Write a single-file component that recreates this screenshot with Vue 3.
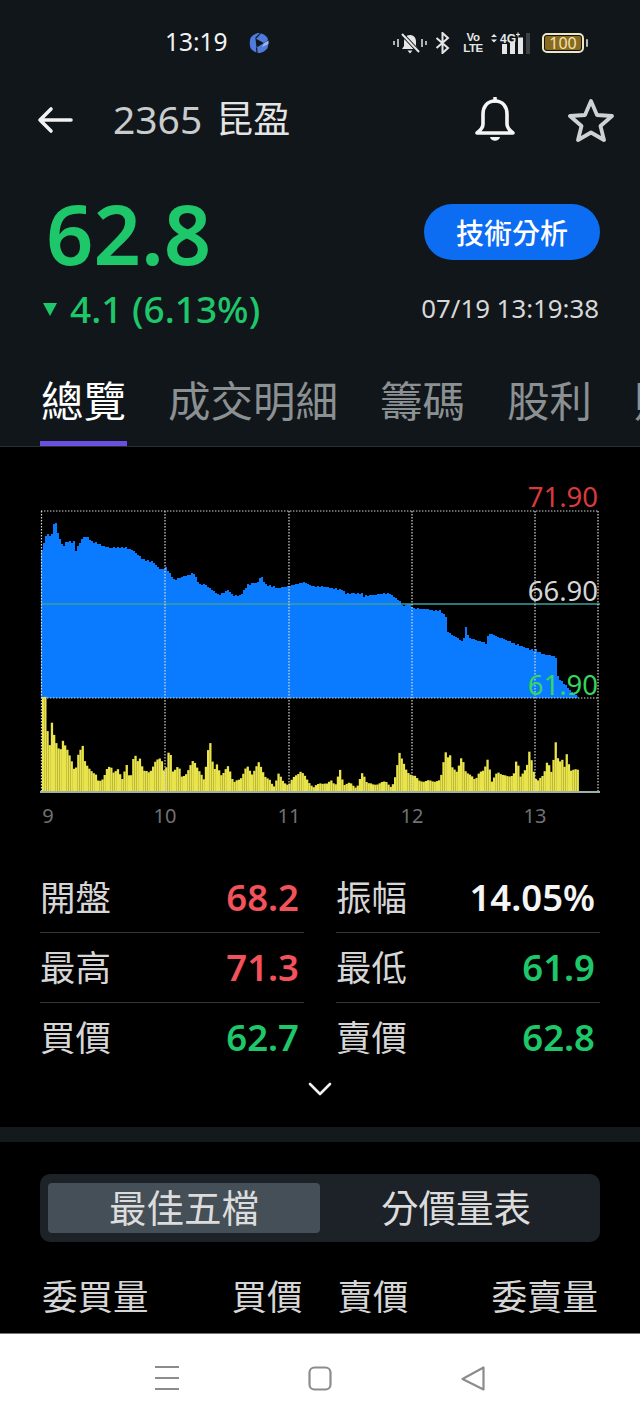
<script setup>
const tabs = ['成交明細', '籌碼', '股利', '財務']

const stats = [
  [{ label: '開盤', value: '68.2', tone: 'up' }, { label: '振幅', value: '14.05%', tone: 'flat' }],
  [{ label: '最高', value: '71.3', tone: 'up' }, { label: '最低', value: '61.9', tone: 'down' }],
  [{ label: '買價', value: '62.7', tone: 'down' }, { label: '賣價', value: '62.8', tone: 'down' }]
]

const gridX = [165, 289, 412, 535]
const xLabels = [
  { x: 48, t: '9' }, { x: 165, t: '10' }, { x: 289, t: '11' }, { x: 412, t: '12' }, { x: 535, t: '13' }
]

const pricePts = [
  [41, 550], [42, 547], [45, 535], [51, 535], [52, 523], [55, 523], [58, 537], [62, 547], [65, 542], [73, 542],
  [75, 550], [82, 537], [87, 537], [90, 541], [108, 548], [123, 547], [133, 551], [143, 560], [152, 562], [160, 570],
  [165, 567], [173, 580], [193, 573], [198, 584], [205, 585], [218, 595], [227, 590], [233, 596], [240, 595], [247, 585],
  [257, 582], [260, 575], [265, 585], [278, 588], [292, 585], [303, 582], [313, 587], [320, 586], [342, 590], [345, 594],
  [360, 593], [363, 596], [388, 593], [400, 602], [402, 607], [408, 603], [412, 608], [440, 611], [445, 617], [447, 632],
  [455, 637], [462, 642], [465, 628], [468, 638], [485, 643], [488, 633], [510, 642], [530, 650], [535, 650], [542, 654],
  [555, 657], [557, 677], [567, 688], [577, 697]
]

const lerp = (pts, x) => {
  for (let i = 1; i < pts.length; i++) {
    if (x <= pts[i][0]) {
      const [x0, y0] = pts[i - 1]
      const [x1, y1] = pts[i]
      return y0 + ((y1 - y0) * (x - x0)) / (x1 - x0 || 1)
    }
  }
  return pts[pts.length - 1][1]
}

let areaPath = 'M41 698'
for (let x = 41; x < 577; x += 2) {
  const y = Math.min(698, Math.round(lerp(pricePts, x) + Math.sin(x * 1.7) * 0.6))
  areaPath += `L${x} ${y}L${x + 2} ${y}`
}
areaPath += 'L578 698Z'

const volZoomL = [
  [38, 655], [46, 655], [47, 755], [52, 755], [53, 935], [57, 935], [58, 800], [65, 728], [72, 770], [80, 800], [90, 815], [97, 780],
  [105, 800], [115, 822], [125, 845], [135, 880], [145, 825], [158, 797], [165, 850], [180, 875], [200, 885], [205, 910],
  [220, 900], [228, 868], [240, 860], [250, 882], [265, 865], [275, 905], [290, 855], [300, 905], [313, 815], [320, 855],
  [327, 828], [340, 875], [358, 880], [375, 848], [393, 835], [405, 885], [418, 803], [428, 875], [445, 860], [455, 895],
  [470, 880], [490, 842], [510, 880], [522, 905], [533, 812], [541, 788], [550, 880], [560, 855], [575, 890], [595, 858],
  [610, 910], [630, 900], [650, 860], [665, 885], [685, 850], [705, 890], [720, 905], [730, 925], [745, 882], [760, 910],
  [775, 915], [795, 890], [812, 875], [830, 900], [850, 925], [870, 910]
]
const volZoomR = [
  [20, 915], [35, 900], [45, 920], [60, 872], [70, 915], [90, 912], [110, 925], [127, 880], [140, 908], [160, 918], [180, 910],
  [200, 908], [215, 925], [225, 895], [238, 818], [248, 845], [260, 880], [285, 890], [295, 905], [340, 905], [360, 905],
  [368, 865], [375, 802], [380, 850], [387, 812], [395, 865], [410, 875], [425, 832], [435, 875], [450, 885], [465, 905],
  [478, 875], [492, 875], [503, 838], [515, 905], [532, 880], [550, 885], [565, 895], [580, 885], [590, 835], [600, 895],
  [620, 860], [628, 815], [640, 875], [650, 905], [670, 890], [682, 840], [695, 885], [707, 785], [715, 850], [725, 838],
  [733, 865], [740, 822], [750, 872], [772, 872]
]
const volPts = [
  ...volZoomL.map(([x, y]) => [x / 3 + 30, (935 - y) / 3]),
  ...volZoomR.map(([x, y]) => [x / 3 + 320, (935 - y) / 3])
]

const bars = []
for (let x = 42; x < 577; x += 2.2) {
  const h = lerp(volPts, x + 0.9) + Math.sin(x * 2.3) * 0.8
  bars.push({ x: +x.toFixed(1), y: +(791 - h).toFixed(1), h: +Math.max(0, h).toFixed(1) })
}
</script>

<template>
  <div class="page">
    <header class="top">
      <div class="status">
        <span class="clock">13:19</span>
        <svg class="app-logo" viewBox="0 0 20 22" width="20" height="22">
          <path d="M10 1 C13 1 17 3.500 18.500 6 C19.500 9 19.500 13 18.500 16 C17 18.500 13 21 10 21 C7 21 3 18.500 1.500 16 C0.500 13 0.500 9 1.500 6 C3 3.500 7 1 10 1 Z" fill="#4f7bdc" />
          <path d="M6.500 6.500 L15 11 L7.500 15.500 Z" fill="#12171b" />
          <path d="M6.500 6.500 C8 4.500 10 3.500 11.500 1 M15 11 C17 11 18 10 20 8 M7.500 15.500 C8 18 8 19 8 22" stroke="#12171b" stroke-width="1.200" fill="none" />
          <path d="M15 11 L19.500 8.500 V12 L13 15 Z" fill="#9db6ee" />
        </svg>
        <span class="status-right">
          <svg width="34" height="22" viewBox="0 0 34 22">
            <path d="M17 3c-4 0-6 3-6 7v4l-2 3h16l-2-3v-4c0-4-2-7-6-7z" fill="#e6e6e6" />
            <path d="M14.500 18.500h5l-2.500 3z" fill="#e6e6e6" />
            <path d="M9 2 L26 20" stroke="#12171b" stroke-width="4" />
            <path d="M9 2 L26 20" stroke="#e6e6e6" stroke-width="2" />
            <path d="M1 9v4M5 7v8M29 7v8M33 9v4" stroke="#e6e6e6" stroke-width="1.500" />
          </svg>
          <svg class="bt" width="15" height="22" viewBox="0 0 15 22" fill="none" stroke="#e6e6e6" stroke-width="2">
            <path d="M1.500 6 L13 16 L7.500 21 V1 L13 6 L1.500 16" />
          </svg>
          <span class="volte"><span>Vo</span><span>LTE</span></span>
          <svg class="signal" width="40" height="22" viewBox="0 0 40 22">
            <path d="M0 5 L3 2 L6 5Z M0 7.500 L3 10.500 L6 7.500Z" fill="#e6e6e6" />
            <text x="9" y="10.500" class="net">4G</text>
            <path d="M25 2.500h4M27 .5v4" stroke="#e6e6e6" stroke-width="1.200" />
            <rect x="11" y="12" width="5" height="10" fill="#e6e6e6" />
            <rect x="19" y="10" width="5" height="12" fill="#e6e6e6" />
            <rect x="27" y="5.500" width="5" height="16.500" fill="#e6e6e6" />
            <rect x="35" y="1" width="4" height="21" fill="#3c4146" />
          </svg>
          <span class="battery"><span class="battery-level">100</span></span>
        </span>
      </div>

      <nav class="nav">
        <svg class="back" width="36" height="28" viewBox="0 0 36 28" fill="none" stroke="#f2f2f2" stroke-width="3.600" stroke-linecap="round" stroke-linejoin="round">
          <path d="M34 14H3M14 3 3 14l11 11" />
        </svg>
        <h1 class="title">2365<span class="title-name">昆盈</span></h1>
        <svg class="bell" width="42" height="46" viewBox="0 0 42 46" fill="none" stroke="#f5f5f5" stroke-width="3.600" stroke-linejoin="round">
          <path d="M21 4c-8 0-12 6-12 13v10c0 3-2 6-6 9h36c-4-3-6-6-6-9V17c0-7-4-13-12-13z" />
          <path d="M21 1v3" stroke-linecap="round" />
          <path d="M16 40c1 5 9 5 10 0z" fill="#f5f5f5" stroke="none" />
        </svg>
        <svg class="star" width="46" height="44" viewBox="0 0 46 44" fill="none" stroke="#cfd2d4" stroke-width="3.800" stroke-linejoin="round">
          <path d="M23 3l6 14 15 1-11.500 10 3.500 14-13-7.500L10 42l3.500-14L2 18l15-1z" />
        </svg>
      </nav>

      <section class="quote">
        <div class="quote-left">
          <div class="price">62.8</div>
          <div class="change"><i class="tri"></i>4.1 (6.13%)</div>
        </div>
        <div class="quote-right">
          <button class="analysis">技術分析</button>
          <div class="stamp">07/19 13:19:38</div>
        </div>
      </section>

      <div class="tabs">
        <span class="tab active">總覽</span>
        <span v-for="t in tabs" :key="t" class="tab">{{ t }}</span>
      </div>
    </header>

    <main class="main">
      <svg class="chart" width="640" height="416" viewBox="0 447 640 416">
        <path :d="areaPath" fill="#0a7bff" />
        <rect v-for="b in bars" :key="b.x" :x="b.x" :y="b.y" width="2.300" :height="b.h" fill="#e9e44c" />
        <line x1="41" y1="604" x2="600" y2="604" stroke="#3f9f9c" stroke-width="1.400" />
        <g stroke="#d8d8d8" stroke-width="1.200" stroke-dasharray="1.400 1.600">
          <line x1="41" y1="511" x2="598" y2="511" />
          <line x1="41" y1="698" x2="598" y2="698" />
          <line x1="41.500" y1="511" x2="41.500" y2="791" />
          <line x1="598" y1="511" x2="598" y2="791" />
          <line v-for="x in gridX" :key="x" :x1="x" y1="511" :x2="x" y2="791" />
        </g>
        <line x1="40" y1="792" x2="600" y2="792" stroke="#d3ebe4" stroke-width="1.600" />
        <text x="598" y="507" text-anchor="end" class="axis red">71.90</text>
        <text x="598" y="601" text-anchor="end" class="axis grey">66.90</text>
        <text x="598" y="695" text-anchor="end" class="axis green">61.90</text>
        <text v-for="l in xLabels" :key="l.t" :x="l.x" y="823" text-anchor="middle" class="tick">{{ l.t }}</text>
      </svg>

      <div class="stats">
        <div v-for="(row, i) in stats" :key="i" class="stat-row">
          <div v-for="c in row" :key="c.label" class="stat">
            <span class="stat-label">{{ c.label }}</span>
            <span class="stat-value" :class="c.tone">{{ c.value }}</span>
          </div>
        </div>
      </div>

      <div class="more">
        <svg width="24" height="14" viewBox="0 0 24 14" fill="none" stroke="#f0f0f0" stroke-width="2.600" stroke-linecap="round" stroke-linejoin="round">
          <path d="M2 2l10 10L22 2" />
        </svg>
      </div>

      <div class="band"></div>

      <div class="segment">
        <span class="seg seg-active">最佳五檔</span>
        <span class="seg">分價量表</span>
      </div>

      <div class="book-head">
        <div class="book-side"><span>委買量</span><span>買價</span></div>
        <div class="book-side"><span>賣價</span><span>委賣量</span></div>
      </div>
    </main>

    <footer class="sysnav">
      <svg width="24" height="26" viewBox="0 0 24 26" stroke="#8c8c8c" stroke-width="2.200">
        <path d="M0 2h24M0 13h24M0 24h24" />
      </svg>
      <svg width="24" height="25" viewBox="0 0 24 25" fill="none" stroke="#8c8c8c" stroke-width="2.200">
        <rect x="1.500" y="1.500" width="21" height="22" rx="5" />
      </svg>
      <svg width="24" height="25" viewBox="0 0 24 25" fill="none" stroke="#8c8c8c" stroke-width="2.200" stroke-linejoin="round">
        <path d="M22.500 1.500v22L1.500 13z" />
      </svg>
    </footer>
  </div>
</template>

<style>
html, body { margin: 0; background: #000; }
</style>

<style scoped>
.page {
  width: 640px;
  height: 1422px;
  overflow: hidden;
  display: flex;
  flex-direction: column;
  background: #000;
  color: #ddd;
  font-family: "Noto Sans", "Noto Sans CJK TC", sans-serif;
}
.top {
  height: 447px;
  box-sizing: border-box;
  background: #11161a;
  border-bottom: 1px solid #2b2f33;
  display: flex;
  flex-direction: column;
  overflow: hidden;
  flex: none;
}
.status {
  height: 85px;
  display: flex;
  align-items: center;
  padding-left: 165px;
  padding-right: 56px;
  box-sizing: border-box;
  flex: none;
}
.clock { font-size: 24.500px; color: #f2f2f2; line-height: 1; width: 84px; }
.app-logo { flex: none; }
.status-right { margin-left: auto; display: flex; align-items: center; }
.bt { margin-left: 8px; }
.volte {
  margin-left: 15px;
  display: flex;
  flex-direction: column;
  align-items: center;
  font-family: "Liberation Sans", sans-serif;
  font-weight: 700;
  font-size: 11.500px;
  letter-spacing: -0.5px;
  line-height: 11px;
  color: #e6e6e6;
  width: 16px;
}
.signal { margin-left: 10px; }
.net { font-size: 12px; font-weight: 700; fill: #e6e6e6; font-family: "Liberation Sans", sans-serif; }
.battery {
  margin-left: 11px;
  width: 42px;
  height: 20px;
  box-sizing: border-box;
  border: 2px solid #efe6c4;
  border-radius: 5px;
  padding: 1px;
  position: relative;
  display: flex;
}
.battery::after {
  content: "";
  position: absolute;
  right: -6px;
  top: 4px;
  width: 2px;
  height: 8px;
  border-radius: 1px;
  background: #b8b8b8;
}
.battery-level {
  flex: 1;
  background: #8a6a1f;
  border-radius: 2px;
  color: #efe3b0;
  font-size: 16px;
  line-height: 14px;
  text-align: center;
}
.nav {
  height: 70px;
  display: flex;
  align-items: center;
  padding-left: 37px;
  padding-right: 26px;
  flex: none;
}
.back { flex: none; }
.title {
  margin: -4px 0 0 40px;
  font-size: 39px;
  font-weight: 400;
  color: #c9cccd;
  line-height: 1;
  flex: 1;
  display: flex;
  align-items: center;
}
.title-name { color: #e4e4e4; font-size: 37px; margin-left: 14px; }
.bell { margin-right: 52px; flex: none; }
.star { flex: none; }
.quote {
  display: flex;
  justify-content: space-between;
  padding: 0 40px 0 43px;
  height: 220px;
  box-sizing: border-box;
  flex: none;
}
.price {
  font-size: 83px;
  font-weight: 600;
  color: #1ec76a;
  line-height: 100px;
  margin: 28px 0 0 3px;
}
.change {
  display: flex;
  align-items: center;
  font-size: 37px;
  font-weight: 500;
  color: #1ec76a;
  line-height: 50px;
  margin-top: 1px;
}
.tri {
  width: 0;
  height: 0;
  border-left: 7px solid transparent;
  border-right: 7px solid transparent;
  border-top: 13px solid #1ec76a;
  margin-right: 13px;
}
.quote-right {
  display: flex;
  flex-direction: column;
  align-items: flex-end;
}
.analysis {
  width: 176px;
  height: 56px;
  border: 0;
  border-radius: 28px;
  background: #0c6cf2;
  color: #fff;
  font: 500 28px "Noto Sans", "Noto Sans CJK TC", sans-serif;
  margin-top: 49px;
  padding: 0;
}
.stamp {
  font-size: 25.800px;
  color: #d8d8d8;
  margin: 31px 1px 0 0;
  line-height: 34px;
}
.tabs {
  display: flex;
  gap: 42px;
  padding-left: 41px;
  height: 71px;
  align-items: flex-start;
  white-space: nowrap;
  box-sizing: border-box;
  width: 760px;
  flex: none;
}
.tab {
  font-size: 42.500px;
  line-height: 48px;
  color: #8b9093;
  position: relative;
  padding-top: 2px;
}
.tab.active { color: #fff; }
.tab.active::after {
  content: "";
  position: absolute;
  left: -1px;
  right: -1px;
  top: 66px;
  height: 6px;
  background: #6a4fe0;
}
.main { flex: 1; display: flex; flex-direction: column; overflow: hidden; }
.chart { display: block; flex: none; }
.axis { font-size: 27.500px; font-family: "Noto Sans", sans-serif; }
.red { fill: #d93a3c; }
.grey { fill: #d5d5d5; }
.green { fill: #35d65c; }
.tick { font-size: 20px; fill: #6f7173; font-family: "Noto Sans", sans-serif; }
.stats { padding: 0 40px; }
.stat-row {
  display: grid;
  grid-template-columns: 264px 264px;
  gap: 32px;
  height: 70px;
}
.stat-row:last-child { height: 69px; }
.stat {
  display: flex;
  justify-content: space-between;
  align-items: center;
  padding-right: 5px;
  box-sizing: border-box;
  border-bottom: 1px solid #34383b;
}
.stat-row:last-child .stat { border-bottom: 0; }
.stat-label { font-size: 35.500px; color: #d6d6d6; line-height: 1; }
.stat-value { font-size: 36.500px; font-weight: 600; line-height: 1; }
.up { color: #f2525a; }
.down { color: #1ec76a; }
.flat { color: #f5f5f5; }
.more { height: 50px; display: flex; justify-content: center; padding-top: 10px; box-sizing: border-box; flex: none; }
.band { height: 15px; background: #14191c; flex: none; margin-top: 5px; }
.segment {
  margin: 32px 40px 0;
  height: 68px;
  box-sizing: border-box;
  padding: 9px 8px;
  background: #1c2228;
  border-radius: 10px;
  display: grid;
  grid-template-columns: 1fr 1fr;
  flex: none;
}
.seg {
  font-size: 37.500px;
  line-height: 50px;
  text-align: center;
  color: #dcdcdc;
  border-radius: 4px;
}
.seg-active { background: #454f57; }
.book-head {
  display: flex;
  gap: 35px;
  padding: 35px 42px 0;
  font-size: 35.500px;
  color: #d6d6d6;
  line-height: 38px;
}
.book-side { flex: 1; display: flex; justify-content: space-between; }
.sysnav {
  height: 89px;
  flex: none;
  box-sizing: border-box;
  background: #fff;
  border-top: 1px solid #777;
  display: grid;
  grid-template-columns: 24px 24px 24px;
  justify-content: center;
  column-gap: 129px;
  align-items: center;
}
</style>
